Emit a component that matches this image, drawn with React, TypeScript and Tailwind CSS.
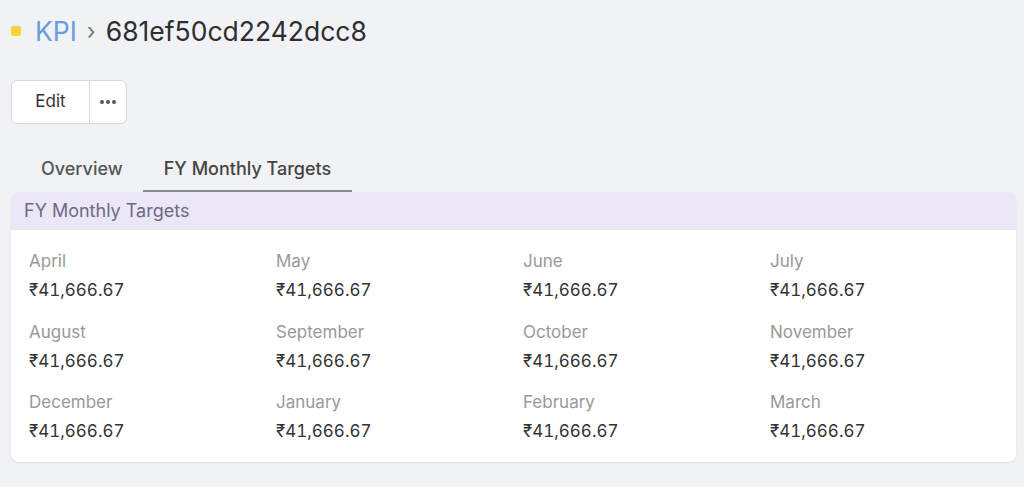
import React from 'react';

const months = [
  'April', 'May', 'June', 'July',
  'August', 'September', 'October', 'November',
  'December', 'January', 'February', 'March',
];

const App: React.FC = () => {
  return (
    <div className="min-h-[487px] bg-[#f1f2f5] px-[11px] pt-[14px] font-['Inter','Liberation_Sans',sans-serif] text-[#333]">
      <div className="flex h-[34px] items-center">
        <span className="mr-[14px] inline-block h-[10px] w-[10px] rounded-[2px] bg-[#f5d33f]" />
        <span className="text-[26.5px] leading-none text-[#6b9ddc]">KPI</span>
        <span className="mx-[10px] text-[23px] leading-none text-[#777]">›</span>
        <span className="text-[26.5px] leading-none text-[#2e2e2e]">681ef50cd2242dcc8</span>
      </div>

      <div className="mt-[32px] flex h-[44px] w-[116px] overflow-hidden rounded-[6px] border border-[#d8d9dc] bg-white">
        <button className="flex w-[78px] items-center justify-center border-r border-[#d8d9dc] text-[17px] text-[#333]">
          Edit
        </button>
        <button className="flex flex-1 items-center justify-center gap-[2px]">
          <span className="h-[4px] w-[4px] rounded-full bg-[#555]" />
          <span className="h-[4px] w-[4px] rounded-full bg-[#555]" />
          <span className="h-[4px] w-[4px] rounded-full bg-[#555]" />
        </button>
      </div>

      <div className="mt-[22px] flex h-[46px] items-stretch">
        <div className="flex items-center pb-[2px] pl-[30px] pr-[20px] text-[18px] font-medium text-[#555]">Overview</div>
        <div className="flex items-center border-b-2 border-[#8a8a8a] px-[21px] text-[18px] font-medium text-[#444]">
          FY Monthly Targets
        </div>
      </div>

      <div className="w-[1005px] overflow-hidden rounded-[8px] bg-white shadow-[0_1px_2px_rgba(0,0,0,0.08)]">
        <div className="flex h-[38px] items-center bg-[#ebe7f8] px-[13px] pb-[2px] text-[18px] text-[#6e6a82]">
          FY Monthly Targets
        </div>
        <div className="grid grid-cols-[247px_247px_247px_247px] gap-y-[17.5px] px-[18px] pb-[19px] pt-[19px]">
          {months.map((m) => (
            <div key={m} className="flex flex-col">
              <span className="text-[17px] leading-[24px] text-[#999]">{m}</span>
              <span className="mt-[5px] text-[17px] leading-[24px] tabular-nums text-[#333]">₹41,666.67</span>
            </div>
          ))}
        </div>
      </div>
    </div>
  );
};

export default App;
